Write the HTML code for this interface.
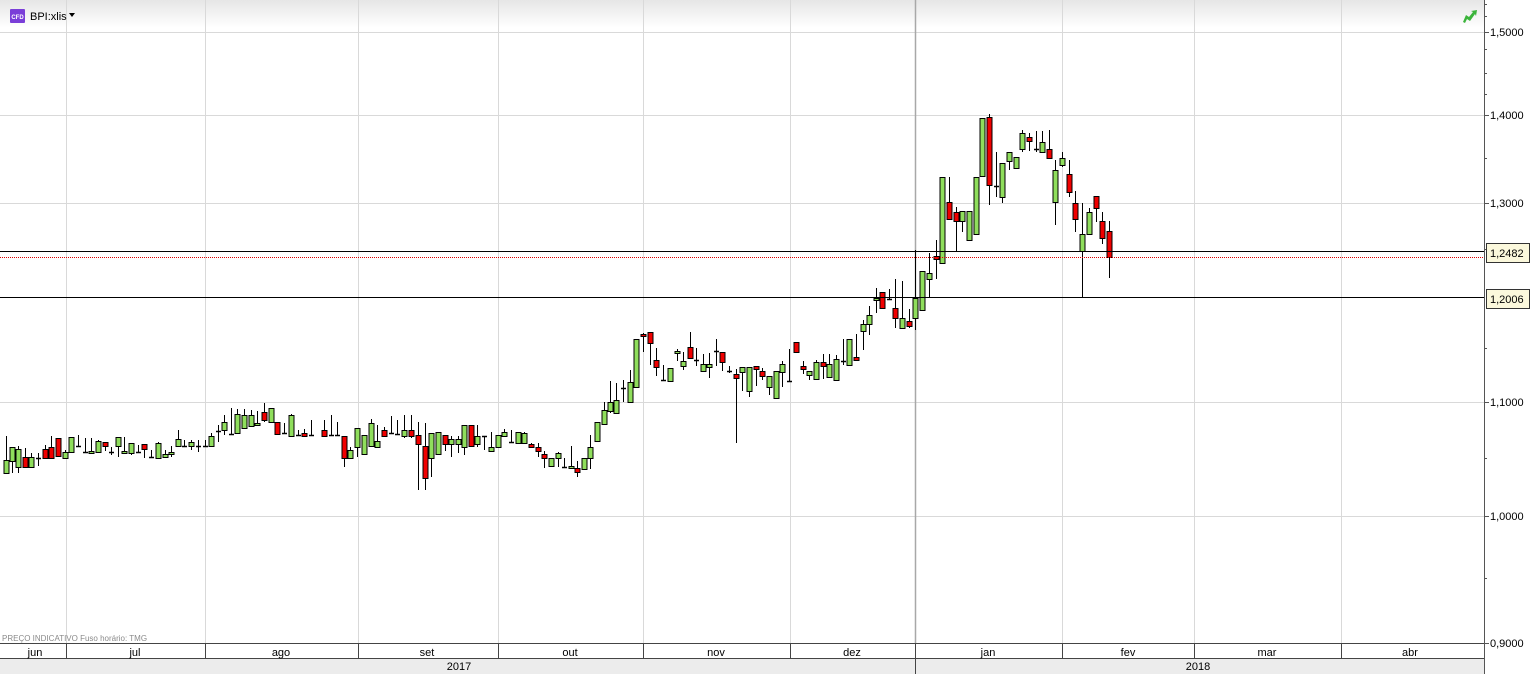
<!DOCTYPE html>
<html><head><meta charset="utf-8"><style>
html,body{margin:0;padding:0;background:#fff;width:1533px;height:674px;overflow:hidden;font-family:"Liberation Sans",sans-serif}
svg{display:block}
text{font-family:"Liberation Sans",sans-serif}
</style></head><body>
<svg id="s" width="1533" height="674" viewBox="0 0 1533 674" xmlns="http://www.w3.org/2000/svg">
<defs><linearGradient id="hg" x1="0" y1="0" x2="0" y2="1"><stop offset="0" stop-color="#e6e6e6"/><stop offset="1" stop-color="#ffffff"/></linearGradient></defs>
<rect x="0" y="0" width="1484" height="643" fill="#fff"/>
<rect x="0" y="0" width="1484" height="28" fill="url(#hg)"/>
<g stroke="#d9d9d9" stroke-width="1">
<line x1="0" y1="32.5" x2="1484" y2="32.5"/><line x1="0" y1="115.5" x2="1484" y2="115.5"/><line x1="0" y1="203.5" x2="1484" y2="203.5"/><line x1="0" y1="402.5" x2="1484" y2="402.5"/><line x1="0" y1="516.5" x2="1484" y2="516.5"/>
<line x1="66.5" y1="0" x2="66.5" y2="643"/><line x1="205.5" y1="0" x2="205.5" y2="643"/><line x1="358.5" y1="0" x2="358.5" y2="643"/><line x1="498.5" y1="0" x2="498.5" y2="643"/><line x1="643.5" y1="0" x2="643.5" y2="643"/><line x1="790.5" y1="0" x2="790.5" y2="643"/><line x1="1062.5" y1="0" x2="1062.5" y2="643"/><line x1="1194.5" y1="0" x2="1194.5" y2="643"/><line x1="1341.5" y1="0" x2="1341.5" y2="643"/>
</g>
<line x1="915.5" y1="0" x2="915.5" y2="674" stroke="#a8a8a8" stroke-width="1.5"/>
<g id="c"></g>
<line x1="0" y1="251.5" x2="1484" y2="251.5" stroke="#000"/>
<line x1="0" y1="297.5" x2="1484" y2="297.5" stroke="#000"/>
<line x1="0" y1="257.5" x2="1484" y2="257.5" stroke="#d00" stroke-dasharray="1,1"/>
<rect x="10" y="9" width="15" height="14" rx="1" fill="#7a3ed8"/>
<text x="17.5" y="19" font-size="6" fill="#fff" text-anchor="middle" font-weight="bold">CFD</text>
<text x="30" y="20" font-size="11" fill="#000">BPI:xlis</text>
<path d="M69 13 L75 13 L72 17 Z" fill="#000"/>
<path d="M1463 22 L1466 15 L1469 17 L1473 12 L1471 11 L1477 10 L1476 16 L1475 14 L1470 21 L1467 19 L1465 23 Z" fill="#3bb43b"/>
<text x="2" y="641" font-size="8" fill="#8a8a8a">PREÇO INDICATIVO   Fuso horário: TMG</text>
<rect x="1485" y="0" width="48" height="674" fill="#fff"/>
<line x1="1484.5" y1="0" x2="1484.5" y2="674" stroke="#555"/>
<g stroke="#555"><line x1="1484" y1="32.5" x2="1489" y2="32.5"/><line x1="1484" y1="115.5" x2="1489" y2="115.5"/><line x1="1484" y1="203.5" x2="1489" y2="203.5"/><line x1="1484" y1="402.5" x2="1489" y2="402.5"/><line x1="1484" y1="516.5" x2="1489" y2="516.5"/><line x1="1484" y1="643.5" x2="1489" y2="643.5"/>
<line x1="1484" y1="4.5" x2="1487" y2="4.5"/><line x1="1484" y1="16.5" x2="1487" y2="16.5"/><line x1="1484" y1="49.5" x2="1487" y2="49.5"/><line x1="1484" y1="73.5" x2="1487" y2="73.5"/><line x1="1484" y1="94.5" x2="1487" y2="94.5"/><line x1="1484" y1="158.5" x2="1487" y2="158.5"/><line x1="1484" y1="249.5" x2="1487" y2="249.5"/><line x1="1484" y1="348.5" x2="1487" y2="348.5"/><line x1="1484" y1="458.5" x2="1487" y2="458.5"/><line x1="1484" y1="578.5" x2="1487" y2="578.5"/></g>
<g font-size="11" fill="#000">
<text x="1490" y="36">1,5000</text><text x="1490" y="119">1,4000</text><text x="1490" y="207">1,3000</text><text x="1490" y="406">1,1000</text><text x="1490" y="520">1,0000</text><text x="1490" y="647">0,9000</text></g>
<rect x="1486.5" y="243.5" width="43" height="19" fill="#fbf8dc" stroke="#333"/>
<text x="1490" y="257" font-size="11">1,2482</text>
<rect x="1486.5" y="289.5" width="43" height="19" fill="#fbf8dc" stroke="#333"/>
<text x="1490" y="303" font-size="11">1,2006</text>
<rect x="0" y="643" width="1484" height="15" fill="#fff"/>
<rect x="0" y="658" width="1484" height="16" fill="#ececec"/>
<line x1="0" y1="643.5" x2="1484" y2="643.5" stroke="#444"/>
<line x1="0" y1="658.5" x2="1484" y2="658.5" stroke="#444"/>
<g stroke="#444"><line x1="66.5" y1="644" x2="66.5" y2="658"/><line x1="205.5" y1="644" x2="205.5" y2="658"/><line x1="358.5" y1="644" x2="358.5" y2="658"/><line x1="498.5" y1="644" x2="498.5" y2="658"/><line x1="643.5" y1="644" x2="643.5" y2="658"/><line x1="790.5" y1="644" x2="790.5" y2="658"/><line x1="915.5" y1="644" x2="915.5" y2="674"/><line x1="1062.5" y1="644" x2="1062.5" y2="658"/><line x1="1194.5" y1="644" x2="1194.5" y2="658"/><line x1="1341.5" y1="644" x2="1341.5" y2="658"/></g>
<g font-size="11" fill="#000" text-anchor="middle">
<text x="35" y="656">jun</text><text x="135" y="656">jul</text><text x="281" y="656">ago</text><text x="427" y="656">set</text><text x="570" y="656">out</text><text x="716" y="656">nov</text><text x="852" y="656">dez</text><text x="988" y="656">jan</text><text x="1128" y="656">fev</text><text x="1267" y="656">mar</text><text x="1410" y="656">abr</text>
<text x="459" y="670">2017</text><text x="1198" y="670">2018</text></g>
</svg>
<script>
var d=[
[6,436,473,460,473,'g'],[12,447,473,447,461,'g'],[18,446,473,449,467,'g'],[25,448,468,457,467,'r'],[31,453,467,457,467,'g'],[38,453,466,458,458,'d'],[45,445,458,449,458,'r'],[51,436,458,447,458,'r'],[58,438,456,438,456,'r'],[65,450,458,452,458,'g'],[71,437,452,437,452,'g'],[78,435,447,446,446,'d'],[85,438,453,452,452,'d'],[91,438,454,451,452,'g'],[98,440,452,441,452,'g'],[105,442,451,442,446,'r'],[111,447,455,452,452,'d'],[118,437,457,437,446,'g'],[124,437,454,451,452,'g'],[131,443,455,443,453,'g'],[138,445,453,452,452,'d'],[144,444,458,444,449,'r'],[151,450,458,457,457,'d'],[158,442,458,443,458,'g'],[165,450,458,454,457,'g'],[171,446,457,452,454,'g'],[178,430,447,439,446,'g'],[184,440,447,446,446,'d'],[191,440,450,442,446,'g'],[198,440,452,446,446,'d'],[205,440,447,446,446,'d'],[211,433,447,436,446,'g'],[218,425,442,431,431,'d'],[224,415,435,422,430,'g'],[231,408,434,434,434,'d'],[237,409,433,414,433,'g'],[244,409,428,415,428,'g'],[251,410,426,415,426,'g'],[257,411,425,423,425,'g'],[264,403,422,412,420,'r'],[271,408,422,408,422,'g'],[277,422,434,422,434,'r'],[284,423,434,433,433,'d'],[291,414,436,415,436,'g'],[298,430,436,435,435,'d'],[304,429,436,433,436,'r'],[311,420,436,435,435,'d'],
[324,420,436,430,436,'r'],[331,415,435,435,435,'d'],[337,422,435,435,435,'d'],[344,436,467,436,458,'r'],[350,447,458,450,458,'g'],[357,428,457,428,447,'g'],[364,435,455,435,454,'g'],[371,419,447,423,446,'g'],[377,425,447,441,447,'g'],[384,427,436,430,436,'r'],[391,416,433,433,433,'d'],[397,420,435,434,434,'d'],[404,415,438,430,436,'g'],[411,415,438,430,436,'r'],[418,422,490,435,444,'r'],[425,423,490,446,478,'r'],[431,433,477,433,458,'g'],[438,432,454,432,454,'g'],[445,435,451,435,444,'r'],[451,436,457,439,444,'g'],[458,436,453,439,444,'g'],[464,425,455,425,447,'g'],[471,425,447,425,446,'r'],[477,425,447,436,444,'g'],[484,436,450,436,436,'d'],[491,432,451,447,451,'g'],[498,435,447,435,447,'g'],[504,429,437,432,436,'g'],[511,430,443,442,442,'d'],[518,432,443,432,443,'g'],[524,432,443,433,443,'g'],[531,443,447,444,447,'r'],[538,443,457,447,451,'r'],[544,451,468,454,458,'r'],[551,458,467,458,466,'g'],[558,452,467,453,458,'g'],[564,458,467,467,467,'d'],[571,446,468,466,468,'g'],[577,461,477,468,472,'r'],[584,458,469,458,469,'g'],[590,435,469,447,458,'g'],[597,422,442,422,441,'g'],[604,402,424,410,424,'g'],[610,381,413,402,411,'g'],[616,383,413,400,413,'g'],[623,380,402,388,388,'d'],[630,370,402,382,402,'g'],[636,339,387,339,387,'g'],[643,333,352,334,336,'r'],[650,332,365,332,343,'r'],[656,348,376,360,367,'r'],[663,365,381,380,380,'d'],[670,368,381,368,381,'g'],[677,349,361,351,353,'g'],[683,352,370,361,366,'g'],[690,332,358,347,358,'r'],[696,348,366,360,360,'d'],[703,354,371,364,371,'g'],[709,353,378,364,367,'g'],[716,339,366,351,351,'d'],[722,352,371,352,362,'r'],[729,366,373,371,371,'d'],[736,369,443,374,378,'r'],[742,367,391,367,372,'g'],[749,367,397,367,391,'g'],[756,366,386,366,369,'r'],[762,368,380,371,376,'r'],[769,376,395,376,387,'g'],[776,371,398,371,398,'g'],[782,361,387,364,372,'g'],[789,349,382,381,381,'d'],[796,342,352,342,352,'r'],[803,361,374,366,369,'r'],[809,371,380,371,375,'g'],[816,360,379,362,379,'g'],[823,354,379,362,366,'r'],[829,354,377,364,377,'g'],[836,355,380,359,380,'g'],[843,339,365,361,361,'d'],[849,339,365,339,365,'g'],[856,334,360,357,360,'r'],[863,320,350,324,331,'g'],[869,306,335,315,324,'g'],
[876,288,313,298,300,'g'],[882,292,308,292,308,'r'],[889,289,300,299,299,'d'],[895,279,328,308,318,'r'],[902,281,328,318,328,'g'],[909,309,328,321,326,'r'],[915,250,330,298,318,'g'],[922,271,310,271,310,'g'],[929,253,298,273,279,'g'],[936,240,279,256,259,'r'],[942,177,263,177,263,'g'],[949,177,219,202,219,'r'],[956,207,251,212,221,'r'],[962,211,232,211,221,'g'],[969,211,240,211,240,'g'],[976,177,234,177,234,'g'],[982,118,176,118,176,'g'],[989,114,205,117,185,'r'],[996,152,197,186,186,'d'],[1002,163,203,163,197,'g'],[1009,152,170,152,161,'g'],[1016,157,168,157,168,'g'],[1022,130,152,133,149,'g'],[1029,133,151,137,141,'r'],[1036,131,152,149,149,'d'],[1042,131,152,142,152,'g'],[1049,130,158,149,158,'r'],[1055,160,225,170,202,'g'],[1062,152,167,158,165,'g'],[1069,160,197,174,192,'r'],[1075,191,232,203,219,'r'],[1082,203,298,234,251,'g'],[1089,208,234,212,234,'g'],[1096,196,222,196,208,'r'],[1102,212,244,221,238,'r'],[1109,221,278,231,257,'r']];
var s='';d.forEach(function(c){var x=c[0];s+='<line x1="'+(x+.5)+'" y1="'+c[1]+'" x2="'+(x+.5)+'" y2="'+c[2]+'" stroke="#000"/>';
if(c[5]=='d'){s+='<line x1="'+(x-2)+'" y1="'+(c[3]+.5)+'" x2="'+(x+3)+'" y2="'+(c[3]+.5)+'" stroke="#000" stroke-width="1.5"/>';}
else{var h=Math.max(c[4]-c[3],2);s+='<rect x="'+(x-2)+'" y="'+(c[3]+.5)+'" width="5" height="'+h+'" fill="'+(c[5]=='g'?'#8fde5c':'#f00000')+'" stroke="#000"/>';}});
document.getElementById('c').innerHTML=s;
</script>
</body></html>
